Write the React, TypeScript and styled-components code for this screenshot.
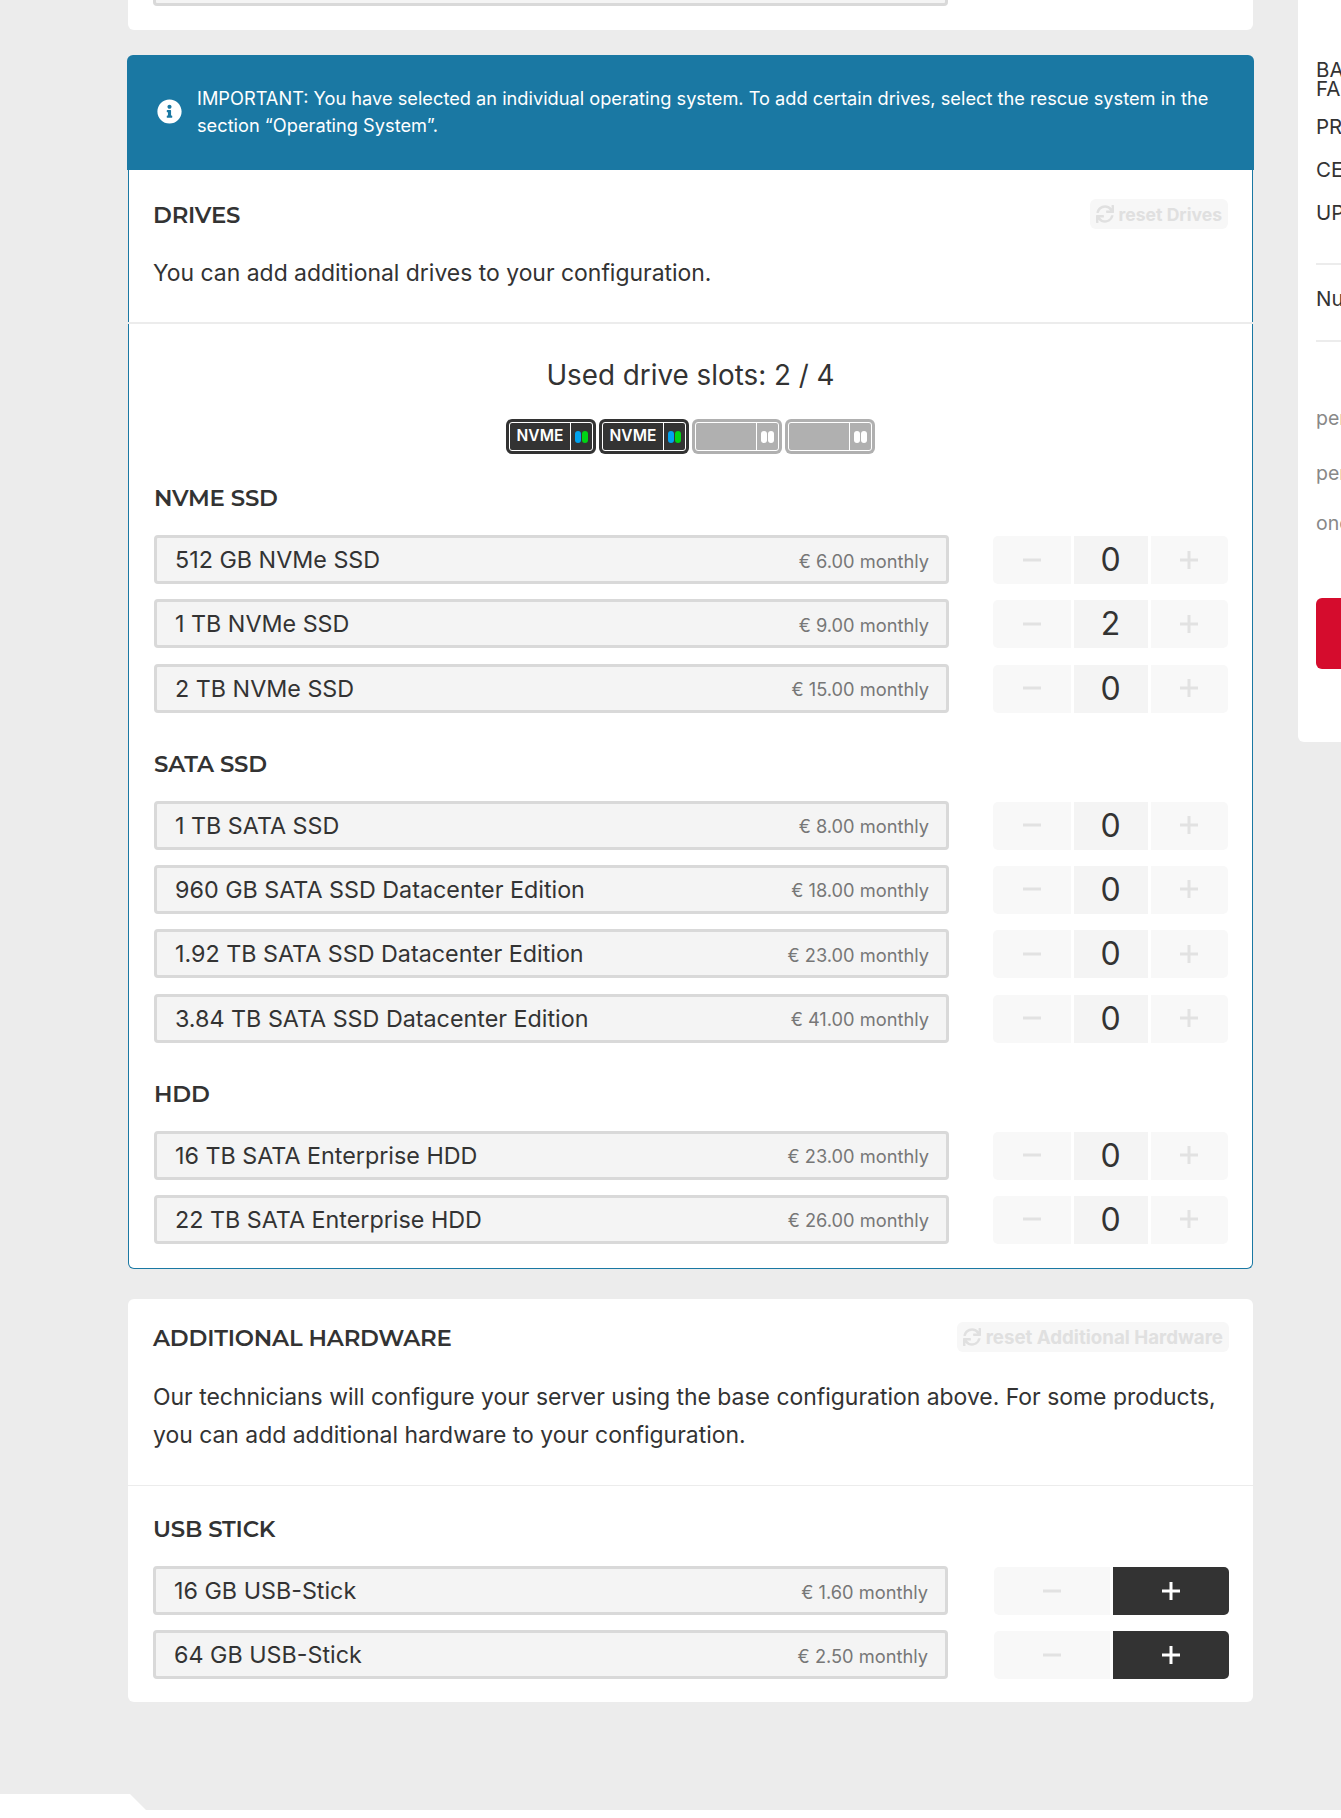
import React from "react";
import styled, { createGlobalStyle } from "styled-components";
import { FaInfoCircle, FaSync } from "react-icons/fa";

const Global = createGlobalStyle`
  html, body { margin: 0; padding: 0; background: #ececec; }
  body { font-family: Inter, "Liberation Sans", sans-serif; color: #333; }
`;
const Page = styled.div`height: 1818px; overflow: hidden; display: flex; flex-direction: column;`;
const Layout = styled.div`flex: 1; min-height: 0; display: flex; align-items: flex-start; padding-left: 128px; gap: 45px; overflow: hidden;`;
const Main = styled.main`width: 1125px; flex-shrink: 0;`;
const Card = styled.section`background: #fff; border-radius: 6px;`;
const TopCard = styled(Card)`margin-top: -60px; padding: 16px 305px 24px 25px; height: 90px; box-sizing: border-box; display: flex; flex-direction: column; justify-content: flex-end;`;
const TopRowEnd = styled.div`height: 49px; box-sizing: border-box; border: 3px solid #d9d9d9; border-radius: 4px; background: #f4f4f4;`;
const Alert = styled.div`margin: 25px -1px 0; height: 115px; box-sizing: border-box; background: #1a78a3; color: #fff; border-radius: 6px 6px 0 0; display: flex; align-items: center; gap: 15px; padding: 0 40px 2px 30px; font-size: 18.23px; line-height: 27px;`;
const AlertIcon = styled(FaInfoCircle)`flex-shrink: 0; width: 25px; height: 25px;`;
const DrivesCard = styled.section`background: #fff; border: 1px solid #1a78a3; border-top: 0; border-radius: 0 0 6px 6px; box-sizing: border-box; height: 1099px;`;
const Header = styled.div`display: flex; justify-content: space-between; align-items: flex-start; padding: ${p => p.$top}px ${p => p.$right}px 0 ${p => p.$left}px;`;
const Heading = styled.h2`margin: 0; font-family: Montserrat, Inter, sans-serif; font-size: 22.8px; font-weight: 600; line-height: 30px; letter-spacing: -0.2px; color: #333; padding-top: ${p => p.$nudge || 0}px;`;
const Reset = styled.button`display: flex; align-items: center; gap: 5px; height: 30px; padding: 0 6px; border: 0; border-radius: 6px; background: #f7f7f7; color: #e0e0e0; font: 700 ${p => p.$size}px Inter, sans-serif; white-space: nowrap; margin-top: ${p => p.$nudge || 0}px;`;
const Description = styled.p`margin: ${p => p.$top}px 0 0; padding: 0 ${p => p.$right}px 0 ${p => p.$left}px; font-size: 22.93px; line-height: 38px; color: #333;`;
const Divider = styled.hr`margin: ${p => p.$top}px ${p => p.$side}px 0; height: ${p => p.$h}px; border: 0; background: #ececec;`;
const Slots = styled.h3`margin: 31px 0 0; text-align: center; font-size: 27.8px; font-weight: 400; line-height: 40px; color: #333;`;
const SlotRow = styled.div`margin-top: 24px; display: flex; justify-content: center; gap: 3px;`;
const Slot = styled.div`width: 90px; height: 35px; box-sizing: border-box; padding: 3px; border-radius: 6px; background: ${p => p.$used ? "#333" : "#b0b0b0"};`;
const SlotInner = styled.div`height: 100%; box-sizing: border-box; border: 1.5px solid #fff; border-radius: 3px; display: flex;`;
const SlotLabel = styled.div`width: 60px; color: #fff; font-size: 15.5px; font-weight: 600; line-height: 26px; text-align: center; letter-spacing: 0.1px;`;
const SlotLeds = styled.div`flex: 1; border-left: 1.5px solid #fff; display: flex; align-items: center; justify-content: center; gap: 1px;`;
const Led = styled.span`width: 6px; height: 12px; border-radius: 3px; background: ${p => p.$color};`;
const Groups = styled.div`padding: ${p => p.$top}px ${p => p.$right}px 0 ${p => p.$left}px;`;
const GroupTitle = styled.h4`margin: ${p => p.$top}px 0 22px; font-family: Montserrat, Inter, sans-serif; font-size: 22.8px; font-weight: 600; line-height: 30px; letter-spacing: -0.2px; color: #333;`;
const Row = styled.div`display: flex; justify-content: space-between; height: 49px; margin-bottom: 15.33px; &:last-child { margin-bottom: 0; }`;
const Label = styled.div`width: 795px; box-sizing: border-box; border: 3px solid #d9d9d9; border-radius: 4px; background: #f4f4f4; display: flex; align-items: center; justify-content: space-between; padding: 0 17px 0 18px;`;
const Name = styled.span`font-size: 23.3px; color: #333;`;
const Price = styled.span`font-size: 18.25px; color: #777; margin-top: 2px;`;
const Stepper = styled.div`width: 235px; display: flex; gap: 3px; height: 48px; margin-top: 1px;`;
const StepBtn = styled.button`flex: 1; min-width: 0; padding: 0; border: 0; display: flex; align-items: center; justify-content: center; background: ${p => p.$dark ? "#333" : "#f8f8f8"}; color: ${p => p.$dark ? "#fff" : "#e2e2e2"}; border-radius: ${p => p.$side === "l" ? "5px 0 0 5px" : "0 5px 5px 0"};`;
const StepVal = styled.div`flex: 0 0 74px; background: #f4f4f4; font-size: 32px; line-height: 48px; text-align: center; color: #333;`;
const Sign = styled.svg`width: 18px; height: 18px; stroke: currentColor; stroke-width: 3; fill: none; margin-top: -1px;`;
const Sidebar = styled.aside`width: 300px; height: 742px; flex-shrink: 0; box-sizing: border-box; background: #fff; border-radius: 0 0 0 6px; padding: 60px 18px 0;`;
const SideLine = styled.div`font-size: 20.5px; line-height: 19px; color: #333; margin-bottom: ${p => p.$mb}px; white-space: nowrap;`;
const SideRule = styled.hr`border: 0; height: 2px; background: #ececec; margin: ${p => p.$t}px 0 ${p => p.$b}px;`;
const SideNote = styled.div`font-size: 19.5px; line-height: 24px; color: #888; margin-bottom: ${p => p.$mb}px; white-space: nowrap;`;
const Cta = styled.button`display: block; width: 260px; height: 71px; border: 0; border-radius: 6px; background: #d50c2d;`;
const Footer = styled.footer`height: 24px; flex-shrink: 0; background: #fff; clip-path: polygon(0 0, 130px 0, 146px 16px, 100% 16px, 100% 100%, 0 100%);`;
const AddCard = styled(Card)`margin-top: 30px; height: 403px; box-sizing: border-box;`;

const Minus = () => <Sign viewBox="0 0 18 18"><path d="M0 9H18" /></Sign>;
const Plus = () => <Sign viewBox="0 0 18 18"><path d="M0 9H18M9 0V18" /></Sign>;

type Item = [string, string, number];
const groups: { title: string; top: number; items: Item[] }[] = [
  { title: "NVME SSD", top: 0, items: [["512 GB NVMe SSD", "€ 6.00 monthly", 0], ["1 TB NVMe SSD", "€ 9.00 monthly", 2], ["2 TB NVMe SSD", "€ 15.00 monthly", 0]] },
  { title: "SATA SSD", top: 36, items: [["1 TB SATA SSD", "€ 8.00 monthly", 0], ["960 GB SATA SSD Datacenter Edition", "€ 18.00 monthly", 0], ["1.92 TB SATA SSD Datacenter Edition", "€ 23.00 monthly", 0], ["3.84 TB SATA SSD Datacenter Edition", "€ 41.00 monthly", 0]] },
  { title: "HDD", top: 36, items: [["16 TB SATA Enterprise HDD", "€ 23.00 monthly", 0], ["22 TB SATA Enterprise HDD", "€ 26.00 monthly", 0]] },
];

const DriveSlot = ({ used }: { used: boolean }) => (
  <Slot $used={used}>
    <SlotInner>
      <SlotLabel>{used ? "NVME" : ""}</SlotLabel>
      <SlotLeds>
        <Led $color={used ? "#00a3ee" : "#fff"} />
        <Led $color={used ? "#00d414" : "#fff"} />
      </SlotLeds>
    </SlotInner>
  </Slot>
);

export default function App() {
  return (
    <Page>
      <Global />
      <Layout>
        <Main>
          <TopCard><TopRowEnd /></TopCard>
          <Alert>
            <AlertIcon />
            <div>IMPORTANT: You have selected an individual operating system. To add certain drives, select the rescue system in the section “Operating System”.</div>
          </Alert>
          <DrivesCard>
            <Header $top={29} $right={24} $left={24}>
              <Heading $nudge={1}>DRIVES</Heading>
              <Reset $size={17.6}><FaSync size={18} />reset Drives</Reset>
            </Header>
            <Description $top={24} $right={24} $left={24}>You can add additional drives to your configuration.</Description>
            <Divider $top={30} $side={-1} $h={2} />
            <Slots>Used drive slots: 2 / 4</Slots>
            <SlotRow>
              <DriveSlot used /><DriveSlot used /><DriveSlot used={false} /><DriveSlot used={false} />
            </SlotRow>
            <Groups $top={29} $right={24} $left={25}>
              {groups.map(g => (
                <div key={g.title}>
                  <GroupTitle $top={g.top}>{g.title}</GroupTitle>
                  {g.items.map(([n, p, v]) => (
                    <Row key={n}>
                      <Label><Name>{n}</Name><Price>{p}</Price></Label>
                      <Stepper>
                        <StepBtn $side="l"><Minus /></StepBtn>
                        <StepVal>{v}</StepVal>
                        <StepBtn $side="r"><Plus /></StepBtn>
                      </Stepper>
                    </Row>
                  ))}
                </div>
              ))}
            </Groups>
          </DrivesCard>
          <AddCard>
            <Header $top={24} $right={24} $left={25}>
              <Heading>ADDITIONAL HARDWARE</Heading>
              <Reset $size={18.7} $nudge={-1}><FaSync size={18} />reset Additional Hardware</Reset>
            </Header>
            <Description $top={25} $right={24} $left={25}>Our technicians will configure your server using the base configuration above. For some products, you can add additional hardware to your configuration.</Description>
            <Divider $top={31} $side={0} $h={1} />
            <Groups $top={28} $right={24} $left={25}>
              <GroupTitle $top={0}>USB STICK</GroupTitle>
              <Row><Label><Name>16 GB USB-Stick</Name><Price>€ 1.60 monthly</Price></Label>
                <Stepper><StepBtn $side="l"><Minus /></StepBtn><StepBtn $side="r" $dark><Plus /></StepBtn></Stepper></Row>
              <Row><Label><Name>64 GB USB-Stick</Name><Price>€ 2.50 monthly</Price></Label>
                <Stepper><StepBtn $side="l"><Minus /></StepBtn><StepBtn $side="r" $dark><Plus /></StepBtn></Stepper></Row>
            </Groups>
          </AddCard>
        </Main>
        <Sidebar>
          <SideLine $mb={19}>BASE PRICE<br />FALKENSTEIN</SideLine>
          <SideLine $mb={24}>PRIMARY IPV4</SideLine>
          <SideLine $mb={24}>CENTOS</SideLine>
          <SideLine $mb={0}>UPLINK</SideLine>
          <SideRule $t={41} $b={24} />
          <SideLine $mb={0}>Number of servers</SideLine>
          <SideRule $t={32} $b={64} />
          <SideNote $mb={31}>per month</SideNote>
          <SideNote $mb={26}>per hour</SideNote>
          <SideNote $mb={63}>once</SideNote>
          <Cta aria-label="Order" />
        </Sidebar>
      </Layout>
      <Footer />
    </Page>
  );
}
